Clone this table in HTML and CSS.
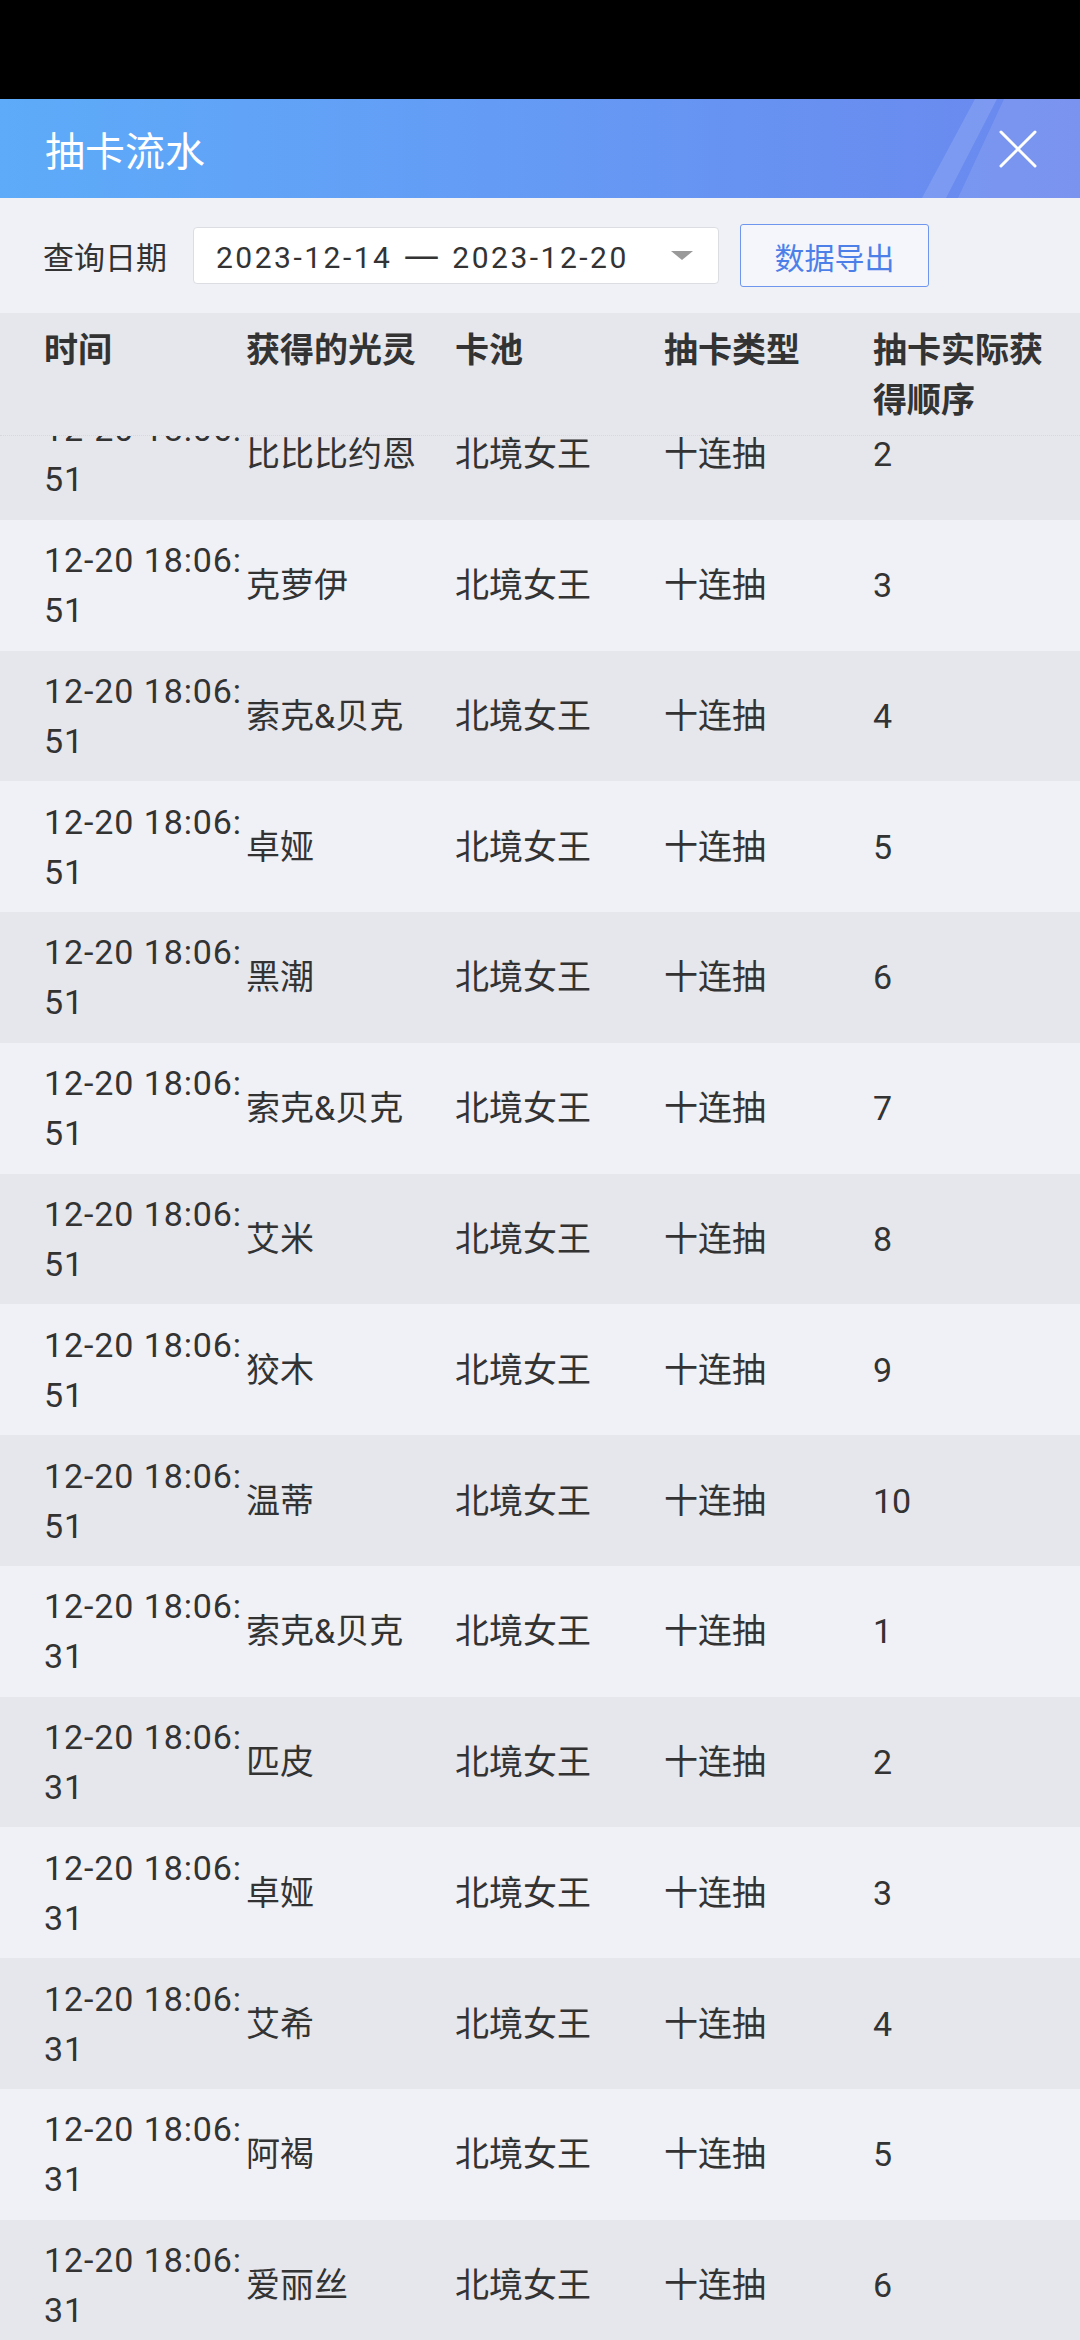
FILE: index.html
```html
<!DOCTYPE html>
<html lang="zh-CN">
<head>
    <meta charset="UTF-8">
    <meta name="viewport" content="width=device-width, initial-scale=1.0">
    <title>抽卡流水</title>
    <link rel="stylesheet" href="styles.css">
</head>
<body>

    <!-- barra de status do aparelho -->
    <div class="statusbar"></div>

    <div class="dialog">
        <div class="dialog-head">
            <svg class="head-deco" viewBox="0 0 200 99" preserveAspectRatio="none">
                <polygon points="95,0 117,0 66,99 42,99" fill="#fff" fill-opacity="0.13"/>
                <polygon points="124,0 200,0 200,99 78,99" fill="#fff" fill-opacity="0.1"/>
            </svg>
            <h1>抽卡流水</h1>
            <button class="close" aria-label="关闭">
                <svg viewBox="0 0 40 40" width="40" height="40">
                    <path d="M3 3L37 37M37 3L3 37" stroke="#fff" stroke-width="3" stroke-linecap="round"/>
                </svg>
            </button>
        </div>

        <div class="toolbar">
            <label>查询日期</label>
            <div class="date-range">
                <span>2023-12-14 <span class="dash">—</span> 2023-12-20</span>
                <span class="caret"></span>
            </div>
            <button class="export">数据导出</button>
        </div>

        <div class="table">
            <div class="row thead">
                <div>时间</div>
                <div>获得的光灵</div>
                <div>卡池</div>
                <div>抽卡类型</div>
                <div>抽卡实际获得顺序</div>
            </div>
            <div class="tbody">
                <div class="row"><div class="time">12-20 18:06:51</div><div>比比比约恩</div><div>北境女王</div><div>十连抽</div><div>2</div></div>
                <div class="row"><div class="time">12-20 18:06:51</div><div>克萝伊</div><div>北境女王</div><div>十连抽</div><div>3</div></div>
                <div class="row"><div class="time">12-20 18:06:51</div><div>索克&amp;贝克</div><div>北境女王</div><div>十连抽</div><div>4</div></div>
                <div class="row"><div class="time">12-20 18:06:51</div><div>卓娅</div><div>北境女王</div><div>十连抽</div><div>5</div></div>
                <div class="row"><div class="time">12-20 18:06:51</div><div>黑潮</div><div>北境女王</div><div>十连抽</div><div>6</div></div>
                <div class="row"><div class="time">12-20 18:06:51</div><div>索克&amp;贝克</div><div>北境女王</div><div>十连抽</div><div>7</div></div>
                <div class="row"><div class="time">12-20 18:06:51</div><div>艾米</div><div>北境女王</div><div>十连抽</div><div>8</div></div>
                <div class="row"><div class="time">12-20 18:06:51</div><div>狡木</div><div>北境女王</div><div>十连抽</div><div>9</div></div>
                <div class="row"><div class="time">12-20 18:06:51</div><div>温蒂</div><div>北境女王</div><div>十连抽</div><div>10</div></div>
                <div class="row"><div class="time">12-20 18:06:31</div><div>索克&amp;贝克</div><div>北境女王</div><div>十连抽</div><div>1</div></div>
                <div class="row"><div class="time">12-20 18:06:31</div><div>匹皮</div><div>北境女王</div><div>十连抽</div><div>2</div></div>
                <div class="row"><div class="time">12-20 18:06:31</div><div>卓娅</div><div>北境女王</div><div>十连抽</div><div>3</div></div>
                <div class="row"><div class="time">12-20 18:06:31</div><div>艾希</div><div>北境女王</div><div>十连抽</div><div>4</div></div>
                <div class="row"><div class="time">12-20 18:06:31</div><div>阿褐</div><div>北境女王</div><div>十连抽</div><div>5</div></div>
                <div class="row"><div class="time">12-20 18:06:31</div><div>爱丽丝</div><div>北境女王</div><div>十连抽</div><div>6</div></div>
            </div>
        </div>
    </div>

</body>
</html>
```

FILE: styles.css
```css
* {
    margin: 0;
    padding: 0;
    box-sizing: border-box;
}

html, body {
    height: 100%;
    overflow: hidden;
    font-family: Roboto, "Noto Sans CJK SC", sans-serif;
    color: #333;
    background: #000;
}

body {
    display: flex;
    flex-direction: column;
}

.statusbar {
    height: 99px;
    flex: none;
    background: #000;
}

.dialog {
    flex: 1;
    min-height: 0;
    display: flex;
    flex-direction: column;
    background: #f0f1f6;
}

/* cabecalho azul */
.dialog-head {
    position: relative;
    height: 99px;
    flex: none;
    display: flex;
    align-items: center;
    justify-content: space-between;
    padding: 0 42px 0 45px;
    background: linear-gradient(90deg, #5dabf9 0%, #649cf5 45%, #6b87ee 100%);
    overflow: hidden;
}

.dialog-head h1 {
    position: relative;
    font-size: 40px;
    font-weight: 400;
    color: #fff;
}

.head-deco {
    position: absolute;
    top: 0;
    right: 0;
    width: 200px;
    height: 99px;
}

.close {
    position: relative;
    width: 40px;
    height: 40px;
    border: 0;
    background: none;
    display: flex;
}

/* filtro de datas */
.toolbar {
    height: 115px;
    flex: none;
    display: flex;
    align-items: center;
    padding-left: 43px;
}

.toolbar label {
    font-size: 31px;
    color: #333;
    margin-right: 26px;
}

.date-range {
    width: 526px;
    height: 57px;
    display: flex;
    align-items: center;
    justify-content: space-between;
    padding: 0 25px 0 22px;
    background: #fff;
    border: 1px solid #dcdde3;
    border-radius: 4px;
    font-size: 30px;
    letter-spacing: 2.5px;
    color: #333;
}

.dash {
    font-family: "DejaVu Sans", sans-serif;
    font-size: 36px;
    letter-spacing: 0;
    margin: 0 3px 0 1px;
}

.caret {
    width: 0;
    height: 0;
    border-left: 11px solid transparent;
    border-right: 11px solid transparent;
    border-top: 9px solid #999;
}

.export {
    margin-left: 21px;
    width: 189px;
    height: 63px;
    border: 1px solid #6f96ef;
    border-radius: 3px;
    background: #f4f6fc;
    color: #4d7fe9;
    font-family: inherit;
    font-size: 30px;
}

/* tabela */
.table {
    flex: 1;
    min-height: 0;
    display: flex;
    flex-direction: column;
}

.row {
    display: grid;
    grid-template-columns: 202px 209px 209px 209px 1fr;
    padding: 0 28px 0 44px;
    font-size: 34px;
    line-height: 50px;
}

.thead {
    height: 123px;
    flex: none;
    align-items: start;
    padding-top: 12px;
    background: #e6e7ed;
    font-weight: 700;
    border-bottom: 1px dotted #d6d8df;
}

.tbody {
    flex: 1;
    overflow: hidden;
}

.tbody .row {
    height: 130.77px;
    align-items: center;
    background: #f0f1f6;
}

.tbody .row:nth-child(odd) {
    background: #e6e7ed;
}

/* primeira linha ja rolada sob o cabecalho */
.tbody .row:first-child {
    margin-top: -47px;
}

.time {
    word-break: break-all;
    letter-spacing: 0.9px;
}
```
